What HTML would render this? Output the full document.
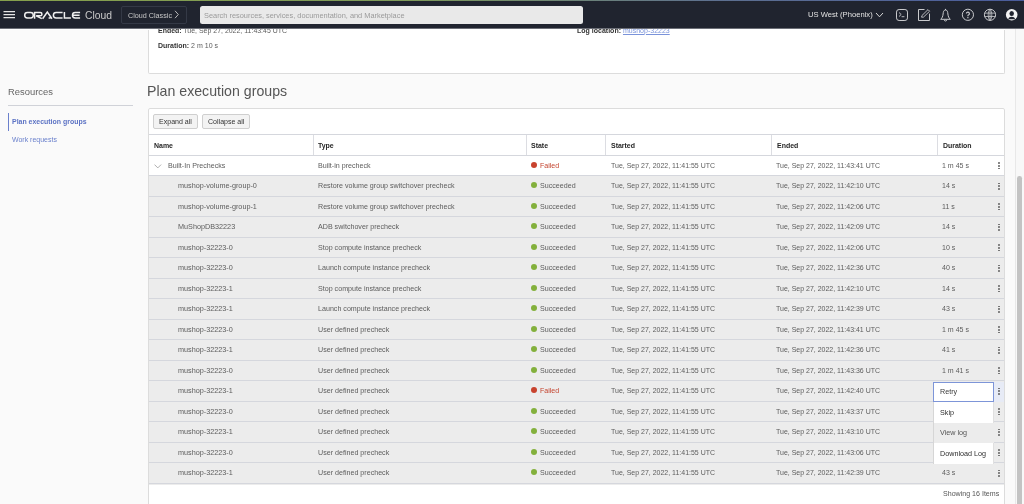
<!DOCTYPE html>
<html><head><meta charset="utf-8">
<style>
*{box-sizing:border-box;margin:0;padding:0}
html,body{width:1024px;height:504px;overflow:hidden;background:#fafafa;font-family:"Liberation Sans",sans-serif;color:#555}
.abs{position:absolute}
#topline{position:absolute;left:0;top:0;width:1024px;height:1px;background:linear-gradient(90deg,#86a04c 0%,#7f9a5a 40%,#5d7090 70%,#4a5c9c 100%)}
#hdr{position:absolute;left:0;top:1px;width:1024px;height:27px;background:#20242f}
.t{position:absolute;white-space:nowrap;transform-origin:0 0}
.row{position:absolute;left:149px;width:855px;background:#ececec}
.bl{position:absolute;left:149px;width:855px;height:1px;background:#d5d7dd}
.vd{position:absolute;width:1px;background:#dcdde2}
.dot{position:absolute;width:6px;height:6px;border-radius:50%}
.kd{position:absolute;width:1.8px;height:1.8px;border-radius:0.9px;background:#666}
.btn{position:absolute;height:14.5px;border:1px solid #cfcfcf;background:#f3f3f3;border-radius:2px}
</style></head><body><div id="root" style="position:absolute;left:0;top:0;width:1024px;height:504px;overflow:hidden;will-change:transform">
<div class="abs" style="left:148px;top:10px;width:857px;height:63.5px;background:#fff;border-radius:0 0 2px 2px;border:1px solid #dcdcdc;border-top:none"></div>
<div class="abs" style="left:148px;top:108px;width:857px;height:420px;background:#fff;border-radius:2px;border:1px solid #dcdcdc"></div>
<div class="abs" style="left:1016px;top:28px;width:8px;height:476px;background:#f8f8f8"></div>
<div class="abs" style="left:1015px;top:28px;width:1px;height:476px;background:#e8e8e8"></div>
<div class="abs" style="left:1017.4px;top:176px;width:4.6px;height:340px;background:#c3c3c3;border-radius:2.3px"></div>
<div class="abs" style="left:0;top:29px;width:1005px;height:1px;background:#fff"></div>
<div class="t" style="left:158.00px;top:27.00px;font-size:8.00px;line-height:8.00px;transform:scaleX(0.8695);color:#5c5c5c;"><b style="color:#333">Ended:</b> Tue, Sep 27, 2022, 11:43:45 UTC</div>
<div class="t" style="left:158.00px;top:42.00px;font-size:8.00px;line-height:8.00px;transform:scaleX(0.8766);color:#5c5c5c;"><b style="color:#333">Duration:</b> 2 m 10 s</div>
<div class="t" style="left:576.70px;top:27.00px;font-size:8.00px;line-height:8.00px;transform:scaleX(0.8762);color:#5c5c5c;"><b style="color:#333">Log location:</b> <span style="color:#7a93da;text-decoration:underline">mushop-32223</span></div>
<div class="t" style="left:7.90px;top:87.00px;font-size:9.60px;line-height:9.60px;transform:scaleX(0.9807);color:#666;">Resources</div>
<div class="abs" style="left:8px;top:105px;width:125px;height:1px;background:#d0d2d8"></div>
<div class="abs" style="left:8px;top:112.5px;width:1.2px;height:18.5px;background:#6b80cc"></div>
<div class="t" style="left:12.30px;top:118.00px;font-size:8.00px;line-height:8.00px;transform:scaleX(0.8684);color:#5b72c4;font-weight:bold;">Plan execution groups</div>
<div class="t" style="left:12.30px;top:136.00px;font-size:8.00px;line-height:8.00px;transform:scaleX(0.8732);color:#6a80cc;">Work requests</div>
<div class="t" style="left:147.20px;top:84.00px;font-size:14.20px;line-height:14.20px;transform:scaleX(0.9978);color:#555;">Plan execution groups</div>
<div class="btn" style="left:153px;top:114px;width:45px"></div>
<div class="btn" style="left:202px;top:114px;width:48px"></div>
<div class="t" style="left:158.50px;top:118.00px;font-size:8.00px;line-height:8.00px;transform:scaleX(0.8807);color:#333;">Expand all</div>
<div class="t" style="left:207.50px;top:118.00px;font-size:8.00px;line-height:8.00px;transform:scaleX(0.8800);color:#333;">Collapse all</div>
<div class="bl" style="top:134px"></div>
<div class="vd" style="left:313.0px;top:135px;height:20px"></div>
<div class="vd" style="left:526.0px;top:135px;height:20px"></div>
<div class="vd" style="left:605.0px;top:135px;height:20px"></div>
<div class="vd" style="left:771.0px;top:135px;height:20px"></div>
<div class="vd" style="left:936.5px;top:135px;height:20px"></div>
<div class="t" style="left:153.50px;top:142.00px;font-size:8.00px;line-height:8.00px;transform:scaleX(0.8700);color:#262626;font-weight:bold;">Name</div>
<div class="t" style="left:318.00px;top:142.00px;font-size:8.00px;line-height:8.00px;transform:scaleX(0.8700);color:#262626;font-weight:bold;">Type</div>
<div class="t" style="left:531.00px;top:142.00px;font-size:8.00px;line-height:8.00px;transform:scaleX(0.8700);color:#262626;font-weight:bold;">State</div>
<div class="t" style="left:610.70px;top:142.00px;font-size:8.00px;line-height:8.00px;transform:scaleX(0.8700);color:#262626;font-weight:bold;">Started</div>
<div class="t" style="left:776.50px;top:142.00px;font-size:8.00px;line-height:8.00px;transform:scaleX(0.8700);color:#262626;font-weight:bold;">Ended</div>
<div class="t" style="left:942.50px;top:142.00px;font-size:8.00px;line-height:8.00px;transform:scaleX(0.8700);color:#262626;font-weight:bold;">Duration</div>
<div class="row" style="top:156px;height:21px;background:#fff"></div>
<div class="row" style="top:176px;height:22px;background:#ececec"></div>
<div class="row" style="top:197px;height:21px;background:#ececec"></div>
<div class="row" style="top:217px;height:22px;background:#ececec"></div>
<div class="row" style="top:238px;height:21px;background:#ececec"></div>
<div class="row" style="top:258px;height:22px;background:#ececec"></div>
<div class="row" style="top:279px;height:21px;background:#ececec"></div>
<div class="row" style="top:299px;height:22px;background:#ececec"></div>
<div class="row" style="top:320px;height:21px;background:#ececec"></div>
<div class="row" style="top:340px;height:22px;background:#ececec"></div>
<div class="row" style="top:361px;height:21px;background:#ececec"></div>
<div class="row" style="top:381px;height:22px;background:#ececec"></div>
<div class="row" style="top:402px;height:21px;background:#ececec"></div>
<div class="row" style="top:422px;height:22px;background:#ececec"></div>
<div class="row" style="top:443px;height:21px;background:#ececec"></div>
<div class="row" style="top:463px;height:22px;background:#ececec"></div>
<div class="bl" style="top:155px"></div>
<div class="bl" style="top:175px"></div>
<div class="bl" style="top:196px"></div>
<div class="bl" style="top:216px"></div>
<div class="bl" style="top:237px"></div>
<div class="bl" style="top:257px"></div>
<div class="bl" style="top:278px"></div>
<div class="bl" style="top:298px"></div>
<div class="bl" style="top:319px"></div>
<div class="bl" style="top:339px"></div>
<div class="bl" style="top:360px"></div>
<div class="bl" style="top:380px"></div>
<div class="bl" style="top:401px"></div>
<div class="bl" style="top:421px"></div>
<div class="bl" style="top:442px"></div>
<div class="bl" style="top:462px"></div>
<div class="bl" style="top:483px"></div>
<svg class="abs" width="8" height="5" viewBox="0 0 8 5" style="left:154.3px;top:163.50px"><path d="M0.5 0.6 L3.8 3.9 L7.1 0.6" fill="none" stroke="#9a9a9a" stroke-width="0.8"/></svg>
<div class="t" style="left:168.00px;top:162.00px;font-size:8.00px;line-height:8.00px;transform:scaleX(0.8900);color:#5c5c5c;">Built-In Prechecks</div>
<div class="t" style="left:318.00px;top:162.00px;font-size:8.00px;line-height:8.00px;transform:scaleX(0.8900);color:#5c5c5c;">Built-in precheck</div>
<div class="dot" style="left:530.8px;top:161.90px;background:#c8432e"></div>
<div class="t" style="left:539.90px;top:162.00px;font-size:8.00px;line-height:8.00px;transform:scaleX(0.8800);color:#c4442f;">Failed</div>
<div class="t" style="left:610.60px;top:162.00px;font-size:8.00px;line-height:8.00px;transform:scaleX(0.8730);color:#5c5c5c;">Tue, Sep 27, 2022, 11:41:55 UTC</div>
<div class="t" style="left:776.40px;top:162.00px;font-size:8.00px;line-height:8.00px;transform:scaleX(0.8730);color:#5c5c5c;">Tue, Sep 27, 2022, 11:43:41 UTC</div>
<div class="t" style="left:941.70px;top:162.00px;font-size:8.00px;line-height:8.00px;transform:scaleX(0.8800);color:#5c5c5c;">1 m 45 s</div>
<div class="kd" style="left:998.1px;top:162.10px"></div>
<div class="kd" style="left:998.1px;top:164.85px"></div>
<div class="kd" style="left:998.1px;top:167.60px"></div>
<div class="t" style="left:178.00px;top:182.00px;font-size:8.00px;line-height:8.00px;transform:scaleX(0.9050);color:#5c5c5c;">mushop-volume-group-0</div>
<div class="t" style="left:318.00px;top:182.00px;font-size:8.00px;line-height:8.00px;transform:scaleX(0.8900);color:#5c5c5c;">Restore volume group switchover precheck</div>
<div class="dot" style="left:530.8px;top:182.40px;background:#83b03c"></div>
<div class="t" style="left:539.90px;top:182.00px;font-size:8.00px;line-height:8.00px;transform:scaleX(0.8900);color:#5c5c5c;">Succeeded</div>
<div class="t" style="left:610.60px;top:182.00px;font-size:8.00px;line-height:8.00px;transform:scaleX(0.8730);color:#5c5c5c;">Tue, Sep 27, 2022, 11:41:55 UTC</div>
<div class="t" style="left:776.40px;top:182.00px;font-size:8.00px;line-height:8.00px;transform:scaleX(0.8730);color:#5c5c5c;">Tue, Sep 27, 2022, 11:42:10 UTC</div>
<div class="t" style="left:941.70px;top:182.00px;font-size:8.00px;line-height:8.00px;transform:scaleX(0.8800);color:#5c5c5c;">14 s</div>
<div class="kd" style="left:998.1px;top:182.60px"></div>
<div class="kd" style="left:998.1px;top:185.35px"></div>
<div class="kd" style="left:998.1px;top:188.10px"></div>
<div class="t" style="left:178.00px;top:203.00px;font-size:8.00px;line-height:8.00px;transform:scaleX(0.9050);color:#5c5c5c;">mushop-volume-group-1</div>
<div class="t" style="left:318.00px;top:203.00px;font-size:8.00px;line-height:8.00px;transform:scaleX(0.8900);color:#5c5c5c;">Restore volume group switchover precheck</div>
<div class="dot" style="left:530.8px;top:202.90px;background:#83b03c"></div>
<div class="t" style="left:539.90px;top:203.00px;font-size:8.00px;line-height:8.00px;transform:scaleX(0.8900);color:#5c5c5c;">Succeeded</div>
<div class="t" style="left:610.60px;top:203.00px;font-size:8.00px;line-height:8.00px;transform:scaleX(0.8730);color:#5c5c5c;">Tue, Sep 27, 2022, 11:41:55 UTC</div>
<div class="t" style="left:776.40px;top:203.00px;font-size:8.00px;line-height:8.00px;transform:scaleX(0.8730);color:#5c5c5c;">Tue, Sep 27, 2022, 11:42:06 UTC</div>
<div class="t" style="left:941.70px;top:203.00px;font-size:8.00px;line-height:8.00px;transform:scaleX(0.8800);color:#5c5c5c;">11 s</div>
<div class="kd" style="left:998.1px;top:203.10px"></div>
<div class="kd" style="left:998.1px;top:205.85px"></div>
<div class="kd" style="left:998.1px;top:208.60px"></div>
<div class="t" style="left:178.00px;top:223.00px;font-size:8.00px;line-height:8.00px;transform:scaleX(0.9050);color:#5c5c5c;">MuShopDB32223</div>
<div class="t" style="left:318.00px;top:223.00px;font-size:8.00px;line-height:8.00px;transform:scaleX(0.8900);color:#5c5c5c;">ADB switchover precheck</div>
<div class="dot" style="left:530.8px;top:223.40px;background:#83b03c"></div>
<div class="t" style="left:539.90px;top:223.00px;font-size:8.00px;line-height:8.00px;transform:scaleX(0.8900);color:#5c5c5c;">Succeeded</div>
<div class="t" style="left:610.60px;top:223.00px;font-size:8.00px;line-height:8.00px;transform:scaleX(0.8730);color:#5c5c5c;">Tue, Sep 27, 2022, 11:41:55 UTC</div>
<div class="t" style="left:776.40px;top:223.00px;font-size:8.00px;line-height:8.00px;transform:scaleX(0.8730);color:#5c5c5c;">Tue, Sep 27, 2022, 11:42:09 UTC</div>
<div class="t" style="left:941.70px;top:223.00px;font-size:8.00px;line-height:8.00px;transform:scaleX(0.8800);color:#5c5c5c;">14 s</div>
<div class="kd" style="left:998.1px;top:223.60px"></div>
<div class="kd" style="left:998.1px;top:226.35px"></div>
<div class="kd" style="left:998.1px;top:229.10px"></div>
<div class="t" style="left:178.00px;top:244.00px;font-size:8.00px;line-height:8.00px;transform:scaleX(0.9050);color:#5c5c5c;">mushop-32223-0</div>
<div class="t" style="left:318.00px;top:244.00px;font-size:8.00px;line-height:8.00px;transform:scaleX(0.8900);color:#5c5c5c;">Stop compute instance precheck</div>
<div class="dot" style="left:530.8px;top:243.90px;background:#83b03c"></div>
<div class="t" style="left:539.90px;top:244.00px;font-size:8.00px;line-height:8.00px;transform:scaleX(0.8900);color:#5c5c5c;">Succeeded</div>
<div class="t" style="left:610.60px;top:244.00px;font-size:8.00px;line-height:8.00px;transform:scaleX(0.8730);color:#5c5c5c;">Tue, Sep 27, 2022, 11:41:55 UTC</div>
<div class="t" style="left:776.40px;top:244.00px;font-size:8.00px;line-height:8.00px;transform:scaleX(0.8730);color:#5c5c5c;">Tue, Sep 27, 2022, 11:42:06 UTC</div>
<div class="t" style="left:941.70px;top:244.00px;font-size:8.00px;line-height:8.00px;transform:scaleX(0.8800);color:#5c5c5c;">10 s</div>
<div class="kd" style="left:998.1px;top:244.10px"></div>
<div class="kd" style="left:998.1px;top:246.85px"></div>
<div class="kd" style="left:998.1px;top:249.60px"></div>
<div class="t" style="left:178.00px;top:264.00px;font-size:8.00px;line-height:8.00px;transform:scaleX(0.9050);color:#5c5c5c;">mushop-32223-0</div>
<div class="t" style="left:318.00px;top:264.00px;font-size:8.00px;line-height:8.00px;transform:scaleX(0.8900);color:#5c5c5c;">Launch compute instance precheck</div>
<div class="dot" style="left:530.8px;top:264.40px;background:#83b03c"></div>
<div class="t" style="left:539.90px;top:264.00px;font-size:8.00px;line-height:8.00px;transform:scaleX(0.8900);color:#5c5c5c;">Succeeded</div>
<div class="t" style="left:610.60px;top:264.00px;font-size:8.00px;line-height:8.00px;transform:scaleX(0.8730);color:#5c5c5c;">Tue, Sep 27, 2022, 11:41:55 UTC</div>
<div class="t" style="left:776.40px;top:264.00px;font-size:8.00px;line-height:8.00px;transform:scaleX(0.8730);color:#5c5c5c;">Tue, Sep 27, 2022, 11:42:36 UTC</div>
<div class="t" style="left:941.70px;top:264.00px;font-size:8.00px;line-height:8.00px;transform:scaleX(0.8800);color:#5c5c5c;">40 s</div>
<div class="kd" style="left:998.1px;top:264.60px"></div>
<div class="kd" style="left:998.1px;top:267.35px"></div>
<div class="kd" style="left:998.1px;top:270.10px"></div>
<div class="t" style="left:178.00px;top:285.00px;font-size:8.00px;line-height:8.00px;transform:scaleX(0.9050);color:#5c5c5c;">mushop-32223-1</div>
<div class="t" style="left:318.00px;top:285.00px;font-size:8.00px;line-height:8.00px;transform:scaleX(0.8900);color:#5c5c5c;">Stop compute instance precheck</div>
<div class="dot" style="left:530.8px;top:284.90px;background:#83b03c"></div>
<div class="t" style="left:539.90px;top:285.00px;font-size:8.00px;line-height:8.00px;transform:scaleX(0.8900);color:#5c5c5c;">Succeeded</div>
<div class="t" style="left:610.60px;top:285.00px;font-size:8.00px;line-height:8.00px;transform:scaleX(0.8730);color:#5c5c5c;">Tue, Sep 27, 2022, 11:41:55 UTC</div>
<div class="t" style="left:776.40px;top:285.00px;font-size:8.00px;line-height:8.00px;transform:scaleX(0.8730);color:#5c5c5c;">Tue, Sep 27, 2022, 11:42:10 UTC</div>
<div class="t" style="left:941.70px;top:285.00px;font-size:8.00px;line-height:8.00px;transform:scaleX(0.8800);color:#5c5c5c;">14 s</div>
<div class="kd" style="left:998.1px;top:285.10px"></div>
<div class="kd" style="left:998.1px;top:287.85px"></div>
<div class="kd" style="left:998.1px;top:290.60px"></div>
<div class="t" style="left:178.00px;top:305.00px;font-size:8.00px;line-height:8.00px;transform:scaleX(0.9050);color:#5c5c5c;">mushop-32223-1</div>
<div class="t" style="left:318.00px;top:305.00px;font-size:8.00px;line-height:8.00px;transform:scaleX(0.8900);color:#5c5c5c;">Launch compute instance precheck</div>
<div class="dot" style="left:530.8px;top:305.40px;background:#83b03c"></div>
<div class="t" style="left:539.90px;top:305.00px;font-size:8.00px;line-height:8.00px;transform:scaleX(0.8900);color:#5c5c5c;">Succeeded</div>
<div class="t" style="left:610.60px;top:305.00px;font-size:8.00px;line-height:8.00px;transform:scaleX(0.8730);color:#5c5c5c;">Tue, Sep 27, 2022, 11:41:55 UTC</div>
<div class="t" style="left:776.40px;top:305.00px;font-size:8.00px;line-height:8.00px;transform:scaleX(0.8730);color:#5c5c5c;">Tue, Sep 27, 2022, 11:42:39 UTC</div>
<div class="t" style="left:941.70px;top:305.00px;font-size:8.00px;line-height:8.00px;transform:scaleX(0.8800);color:#5c5c5c;">43 s</div>
<div class="kd" style="left:998.1px;top:305.60px"></div>
<div class="kd" style="left:998.1px;top:308.35px"></div>
<div class="kd" style="left:998.1px;top:311.10px"></div>
<div class="t" style="left:178.00px;top:326.00px;font-size:8.00px;line-height:8.00px;transform:scaleX(0.9050);color:#5c5c5c;">mushop-32223-0</div>
<div class="t" style="left:318.00px;top:326.00px;font-size:8.00px;line-height:8.00px;transform:scaleX(0.8900);color:#5c5c5c;">User defined precheck</div>
<div class="dot" style="left:530.8px;top:325.90px;background:#83b03c"></div>
<div class="t" style="left:539.90px;top:326.00px;font-size:8.00px;line-height:8.00px;transform:scaleX(0.8900);color:#5c5c5c;">Succeeded</div>
<div class="t" style="left:610.60px;top:326.00px;font-size:8.00px;line-height:8.00px;transform:scaleX(0.8730);color:#5c5c5c;">Tue, Sep 27, 2022, 11:41:55 UTC</div>
<div class="t" style="left:776.40px;top:326.00px;font-size:8.00px;line-height:8.00px;transform:scaleX(0.8730);color:#5c5c5c;">Tue, Sep 27, 2022, 11:43:41 UTC</div>
<div class="t" style="left:941.70px;top:326.00px;font-size:8.00px;line-height:8.00px;transform:scaleX(0.8800);color:#5c5c5c;">1 m 45 s</div>
<div class="kd" style="left:998.1px;top:326.10px"></div>
<div class="kd" style="left:998.1px;top:328.85px"></div>
<div class="kd" style="left:998.1px;top:331.60px"></div>
<div class="t" style="left:178.00px;top:346.00px;font-size:8.00px;line-height:8.00px;transform:scaleX(0.9050);color:#5c5c5c;">mushop-32223-1</div>
<div class="t" style="left:318.00px;top:346.00px;font-size:8.00px;line-height:8.00px;transform:scaleX(0.8900);color:#5c5c5c;">User defined precheck</div>
<div class="dot" style="left:530.8px;top:346.40px;background:#83b03c"></div>
<div class="t" style="left:539.90px;top:346.00px;font-size:8.00px;line-height:8.00px;transform:scaleX(0.8900);color:#5c5c5c;">Succeeded</div>
<div class="t" style="left:610.60px;top:346.00px;font-size:8.00px;line-height:8.00px;transform:scaleX(0.8730);color:#5c5c5c;">Tue, Sep 27, 2022, 11:41:55 UTC</div>
<div class="t" style="left:776.40px;top:346.00px;font-size:8.00px;line-height:8.00px;transform:scaleX(0.8730);color:#5c5c5c;">Tue, Sep 27, 2022, 11:42:36 UTC</div>
<div class="t" style="left:941.70px;top:346.00px;font-size:8.00px;line-height:8.00px;transform:scaleX(0.8800);color:#5c5c5c;">41 s</div>
<div class="kd" style="left:998.1px;top:346.60px"></div>
<div class="kd" style="left:998.1px;top:349.35px"></div>
<div class="kd" style="left:998.1px;top:352.10px"></div>
<div class="t" style="left:178.00px;top:367.00px;font-size:8.00px;line-height:8.00px;transform:scaleX(0.9050);color:#5c5c5c;">mushop-32223-0</div>
<div class="t" style="left:318.00px;top:367.00px;font-size:8.00px;line-height:8.00px;transform:scaleX(0.8900);color:#5c5c5c;">User defined precheck</div>
<div class="dot" style="left:530.8px;top:366.90px;background:#83b03c"></div>
<div class="t" style="left:539.90px;top:367.00px;font-size:8.00px;line-height:8.00px;transform:scaleX(0.8900);color:#5c5c5c;">Succeeded</div>
<div class="t" style="left:610.60px;top:367.00px;font-size:8.00px;line-height:8.00px;transform:scaleX(0.8730);color:#5c5c5c;">Tue, Sep 27, 2022, 11:41:55 UTC</div>
<div class="t" style="left:776.40px;top:367.00px;font-size:8.00px;line-height:8.00px;transform:scaleX(0.8730);color:#5c5c5c;">Tue, Sep 27, 2022, 11:43:36 UTC</div>
<div class="t" style="left:941.70px;top:367.00px;font-size:8.00px;line-height:8.00px;transform:scaleX(0.8800);color:#5c5c5c;">1 m 41 s</div>
<div class="kd" style="left:998.1px;top:367.10px"></div>
<div class="kd" style="left:998.1px;top:369.85px"></div>
<div class="kd" style="left:998.1px;top:372.60px"></div>
<div class="t" style="left:178.00px;top:387.00px;font-size:8.00px;line-height:8.00px;transform:scaleX(0.9050);color:#5c5c5c;">mushop-32223-1</div>
<div class="t" style="left:318.00px;top:387.00px;font-size:8.00px;line-height:8.00px;transform:scaleX(0.8900);color:#5c5c5c;">User defined precheck</div>
<div class="dot" style="left:530.8px;top:387.40px;background:#c8432e"></div>
<div class="t" style="left:539.90px;top:387.00px;font-size:8.00px;line-height:8.00px;transform:scaleX(0.8800);color:#c4442f;">Failed</div>
<div class="t" style="left:610.60px;top:387.00px;font-size:8.00px;line-height:8.00px;transform:scaleX(0.8730);color:#5c5c5c;">Tue, Sep 27, 2022, 11:41:55 UTC</div>
<div class="t" style="left:776.40px;top:387.00px;font-size:8.00px;line-height:8.00px;transform:scaleX(0.8730);color:#5c5c5c;">Tue, Sep 27, 2022, 11:42:40 UTC</div>
<div class="kd" style="left:998.1px;top:387.60px"></div>
<div class="kd" style="left:998.1px;top:390.35px"></div>
<div class="kd" style="left:998.1px;top:393.10px"></div>
<div class="t" style="left:178.00px;top:408.00px;font-size:8.00px;line-height:8.00px;transform:scaleX(0.9050);color:#5c5c5c;">mushop-32223-0</div>
<div class="t" style="left:318.00px;top:408.00px;font-size:8.00px;line-height:8.00px;transform:scaleX(0.8900);color:#5c5c5c;">User defined precheck</div>
<div class="dot" style="left:530.8px;top:407.90px;background:#83b03c"></div>
<div class="t" style="left:539.90px;top:408.00px;font-size:8.00px;line-height:8.00px;transform:scaleX(0.8900);color:#5c5c5c;">Succeeded</div>
<div class="t" style="left:610.60px;top:408.00px;font-size:8.00px;line-height:8.00px;transform:scaleX(0.8730);color:#5c5c5c;">Tue, Sep 27, 2022, 11:41:55 UTC</div>
<div class="t" style="left:776.40px;top:408.00px;font-size:8.00px;line-height:8.00px;transform:scaleX(0.8730);color:#5c5c5c;">Tue, Sep 27, 2022, 11:43:37 UTC</div>
<div class="kd" style="left:998.1px;top:408.10px"></div>
<div class="kd" style="left:998.1px;top:410.85px"></div>
<div class="kd" style="left:998.1px;top:413.60px"></div>
<div class="t" style="left:178.00px;top:428.00px;font-size:8.00px;line-height:8.00px;transform:scaleX(0.9050);color:#5c5c5c;">mushop-32223-1</div>
<div class="t" style="left:318.00px;top:428.00px;font-size:8.00px;line-height:8.00px;transform:scaleX(0.8900);color:#5c5c5c;">User defined precheck</div>
<div class="dot" style="left:530.8px;top:428.40px;background:#83b03c"></div>
<div class="t" style="left:539.90px;top:428.00px;font-size:8.00px;line-height:8.00px;transform:scaleX(0.8900);color:#5c5c5c;">Succeeded</div>
<div class="t" style="left:610.60px;top:428.00px;font-size:8.00px;line-height:8.00px;transform:scaleX(0.8730);color:#5c5c5c;">Tue, Sep 27, 2022, 11:41:55 UTC</div>
<div class="t" style="left:776.40px;top:428.00px;font-size:8.00px;line-height:8.00px;transform:scaleX(0.8730);color:#5c5c5c;">Tue, Sep 27, 2022, 11:43:10 UTC</div>
<div class="kd" style="left:998.1px;top:428.60px"></div>
<div class="kd" style="left:998.1px;top:431.35px"></div>
<div class="kd" style="left:998.1px;top:434.10px"></div>
<div class="t" style="left:178.00px;top:449.00px;font-size:8.00px;line-height:8.00px;transform:scaleX(0.9050);color:#5c5c5c;">mushop-32223-0</div>
<div class="t" style="left:318.00px;top:449.00px;font-size:8.00px;line-height:8.00px;transform:scaleX(0.8900);color:#5c5c5c;">User defined precheck</div>
<div class="dot" style="left:530.8px;top:448.90px;background:#83b03c"></div>
<div class="t" style="left:539.90px;top:449.00px;font-size:8.00px;line-height:8.00px;transform:scaleX(0.8900);color:#5c5c5c;">Succeeded</div>
<div class="t" style="left:610.60px;top:449.00px;font-size:8.00px;line-height:8.00px;transform:scaleX(0.8730);color:#5c5c5c;">Tue, Sep 27, 2022, 11:41:55 UTC</div>
<div class="t" style="left:776.40px;top:449.00px;font-size:8.00px;line-height:8.00px;transform:scaleX(0.8730);color:#5c5c5c;">Tue, Sep 27, 2022, 11:43:06 UTC</div>
<div class="kd" style="left:998.1px;top:449.10px"></div>
<div class="kd" style="left:998.1px;top:451.85px"></div>
<div class="kd" style="left:998.1px;top:454.60px"></div>
<div class="t" style="left:178.00px;top:469.00px;font-size:8.00px;line-height:8.00px;transform:scaleX(0.9050);color:#5c5c5c;">mushop-32223-1</div>
<div class="t" style="left:318.00px;top:469.00px;font-size:8.00px;line-height:8.00px;transform:scaleX(0.8900);color:#5c5c5c;">User defined precheck</div>
<div class="dot" style="left:530.8px;top:469.40px;background:#83b03c"></div>
<div class="t" style="left:539.90px;top:469.00px;font-size:8.00px;line-height:8.00px;transform:scaleX(0.8900);color:#5c5c5c;">Succeeded</div>
<div class="t" style="left:610.60px;top:469.00px;font-size:8.00px;line-height:8.00px;transform:scaleX(0.8730);color:#5c5c5c;">Tue, Sep 27, 2022, 11:41:55 UTC</div>
<div class="t" style="left:776.40px;top:469.00px;font-size:8.00px;line-height:8.00px;transform:scaleX(0.8730);color:#5c5c5c;">Tue, Sep 27, 2022, 11:42:39 UTC</div>
<div class="t" style="left:941.70px;top:469.00px;font-size:8.00px;line-height:8.00px;transform:scaleX(0.8800);color:#5c5c5c;">43 s</div>
<div class="kd" style="left:998.1px;top:469.60px"></div>
<div class="kd" style="left:998.1px;top:472.35px"></div>
<div class="kd" style="left:998.1px;top:475.10px"></div>
<div class="abs" style="left:993px;top:381.5px;width:11px;height:20px;background:#e7ebf6"></div>
<div class="kd" style="left:998.1px;top:387.60px"></div>
<div class="kd" style="left:998.1px;top:390.35px"></div>
<div class="kd" style="left:998.1px;top:393.10px"></div>
<div class="abs" style="left:933px;top:381.5px;width:60.5px;height:82px;background:#fff;border-left:1px solid #d6d6d6;border-right:1px solid #e0e0e0"></div>
<div class="abs" style="left:933px;top:422.5px;width:60.5px;height:20.5px;background:#ececec;border-left:1px solid #d6d6d6"></div>
<div class="abs" style="left:933px;top:381.5px;width:60.5px;height:20.5px;border:1.2px solid #7d95d8"></div>
<div class="t" style="left:939.80px;top:388.00px;font-size:8.00px;line-height:8.00px;transform:scaleX(0.9000);color:#3a3a3a;">Retry</div>
<div class="t" style="left:939.80px;top:409.00px;font-size:8.00px;line-height:8.00px;transform:scaleX(0.9000);color:#2e2e2e;">Skip</div>
<div class="t" style="left:939.80px;top:429.00px;font-size:8.00px;line-height:8.00px;transform:scaleX(0.9000);color:#555;">View log</div>
<div class="t" style="left:939.80px;top:450.00px;font-size:8.00px;line-height:8.00px;transform:scaleX(0.8994);color:#2e2e2e;">Download Log</div>
<div class="t" style="left:943.30px;top:490.00px;font-size:8.00px;line-height:8.00px;transform:scaleX(0.8838);color:#555;">Showing 16 Items</div>
<div class="abs" style="left:0;top:28px;width:1024px;height:1px;background:#6c6f77"></div>
<div id="topline"></div><div id="hdr"></div>
<svg class="abs" style="left:0;top:0" width="200" height="28" viewBox="0 0 200 28">
 <g stroke="#e6e6e6" stroke-width="1.1" fill="none">
  <path d="M3.5 11.6H15M3.5 14.6H15M3.5 17.6H15"/>
 </g>
 <g stroke="#f0f0f0" stroke-width="1.5" fill="none" stroke-linecap="butt">
  <rect x="24.7" y="12.55" width="8.6" height="5.4" rx="2.7" ry="2.7"/>
  <path d="M34.6 18.7V12.55H40.3A1.65 1.65 0 0 1 40.3 15.85H36.2L41.8 18.7"/>
  <path d="M42.6 18.7L47.3 12.1L52 18.7M48.6 17.95H50.6"/>
  <path d="M62.6 12.55H56.1A2.7 2.7 0 0 0 56.1 17.95H62.6"/>
  <path d="M64.4 12V17.95H70.9"/>
  <path d="M80.1 12.55H75.2A2.7 2.7 0 0 0 75.2 17.95H80.1M73.2 15.25H79.6"/>
 </g>
</svg>
<div class="t" style="left:84.80px;top:11.00px;font-size:10.00px;line-height:10.00px;transform:scaleX(1.0334);color:#c9c9c9;">Cloud</div>
<div class="abs" style="left:121px;top:6px;width:65.5px;height:18px;border:1px solid #343946;border-radius:2px"></div>
<div class="t" style="left:128.00px;top:12.00px;font-size:8.00px;line-height:8.00px;transform:scaleX(0.8997);color:#c8c8c8;">Cloud Classic</div>
<svg class="abs" style="left:174px;top:10px" width="6" height="9" viewBox="0 0 6 9"><path d="M1 0.8L4.3 4.5L1 8.2" fill="none" stroke="#c8c8c8" stroke-width="0.9"/></svg>
<div class="abs" style="left:200px;top:6px;width:383px;height:17.5px;background:#e9e9e9;border-radius:2.5px"></div>
<div class="t" style="left:204.30px;top:12.00px;font-size:7.60px;line-height:7.60px;transform:scaleX(0.9736);color:#9a9a9a;">Search resources, services, documentation, and Marketplace</div>
<div class="t" style="left:808.30px;top:11.00px;font-size:7.80px;line-height:7.80px;transform:scaleX(0.9777);color:#e2e2e2;">US West (Phoenix)</div>
<svg class="abs" style="left:875px;top:12px" width="9" height="6" viewBox="0 0 9 6"><path d="M1 1L4.5 4.8L8 1" fill="none" stroke="#d8d8d8" stroke-width="1"/></svg>
<svg class="abs" style="left:890px;top:4px" width="134" height="22" viewBox="890 4 134 22">
 <g fill="none" stroke="#c9cacd" stroke-width="1">
  <rect x="896.5" y="9.5" width="11" height="11" rx="2.6"/>
  <path d="M899 12.5L901.2 14.5L899 16.5M901.6 16.7H904.4" stroke-width="0.9"/>
  <path d="M924.5 9.5H918.5V20.5H929.5V13.6"/>
  <path d="M921.6 17.2L921.9 15.6L928 9.6L929.6 11.2L923.5 17.1Z" stroke-width="0.9"/>
  <path d="M945.5 10C943.6 10 943.3 12 943.1 14C942.8 16.6 942.2 17.9 940.7 19.3H950.3C948.8 17.9 948.2 16.6 947.9 14C947.7 12 947.4 10 945.5 10Z M944.3 19.8A1.2 1.2 0 0 0 946.7 19.8"/>
  <path d="M945.5 8.9V10"/>
  <circle cx="967.9" cy="14.8" r="5.6"/>
  <path d="M966.4 13.6A1.5 1.5 0 1 1 968.3 15C967.9 15.3 967.9 15.7 967.9 16.3" stroke-width="1.15"/>
  <circle cx="990" cy="14.8" r="5.6"/>
  <path d="M984.6 13.1H995.4M984.6 16.5H995.4M990 9.2V20.4M990 9.2C987.6 11.5 987.6 18.1 990 20.4M990 9.2C992.4 11.5 992.4 18.1 990 20.4" stroke-width="0.8"/>
 </g>
 <g fill="#e0e0e0"><circle cx="967.9" cy="17.7" r="0.65"/></g>
 <circle cx="1011.7" cy="14.75" r="5.8" fill="#f4f4f4"/>
 <ellipse cx="1011.7" cy="13.5" rx="2.25" ry="2.5" fill="#20242f"/>
 <path d="M1008.3 19.2C1008.7 17.4 1010 16.7 1011.7 16.7C1013.4 16.7 1014.7 17.4 1015.1 19.2Z" fill="#20242f"/>
</svg>
</div></body></html>
